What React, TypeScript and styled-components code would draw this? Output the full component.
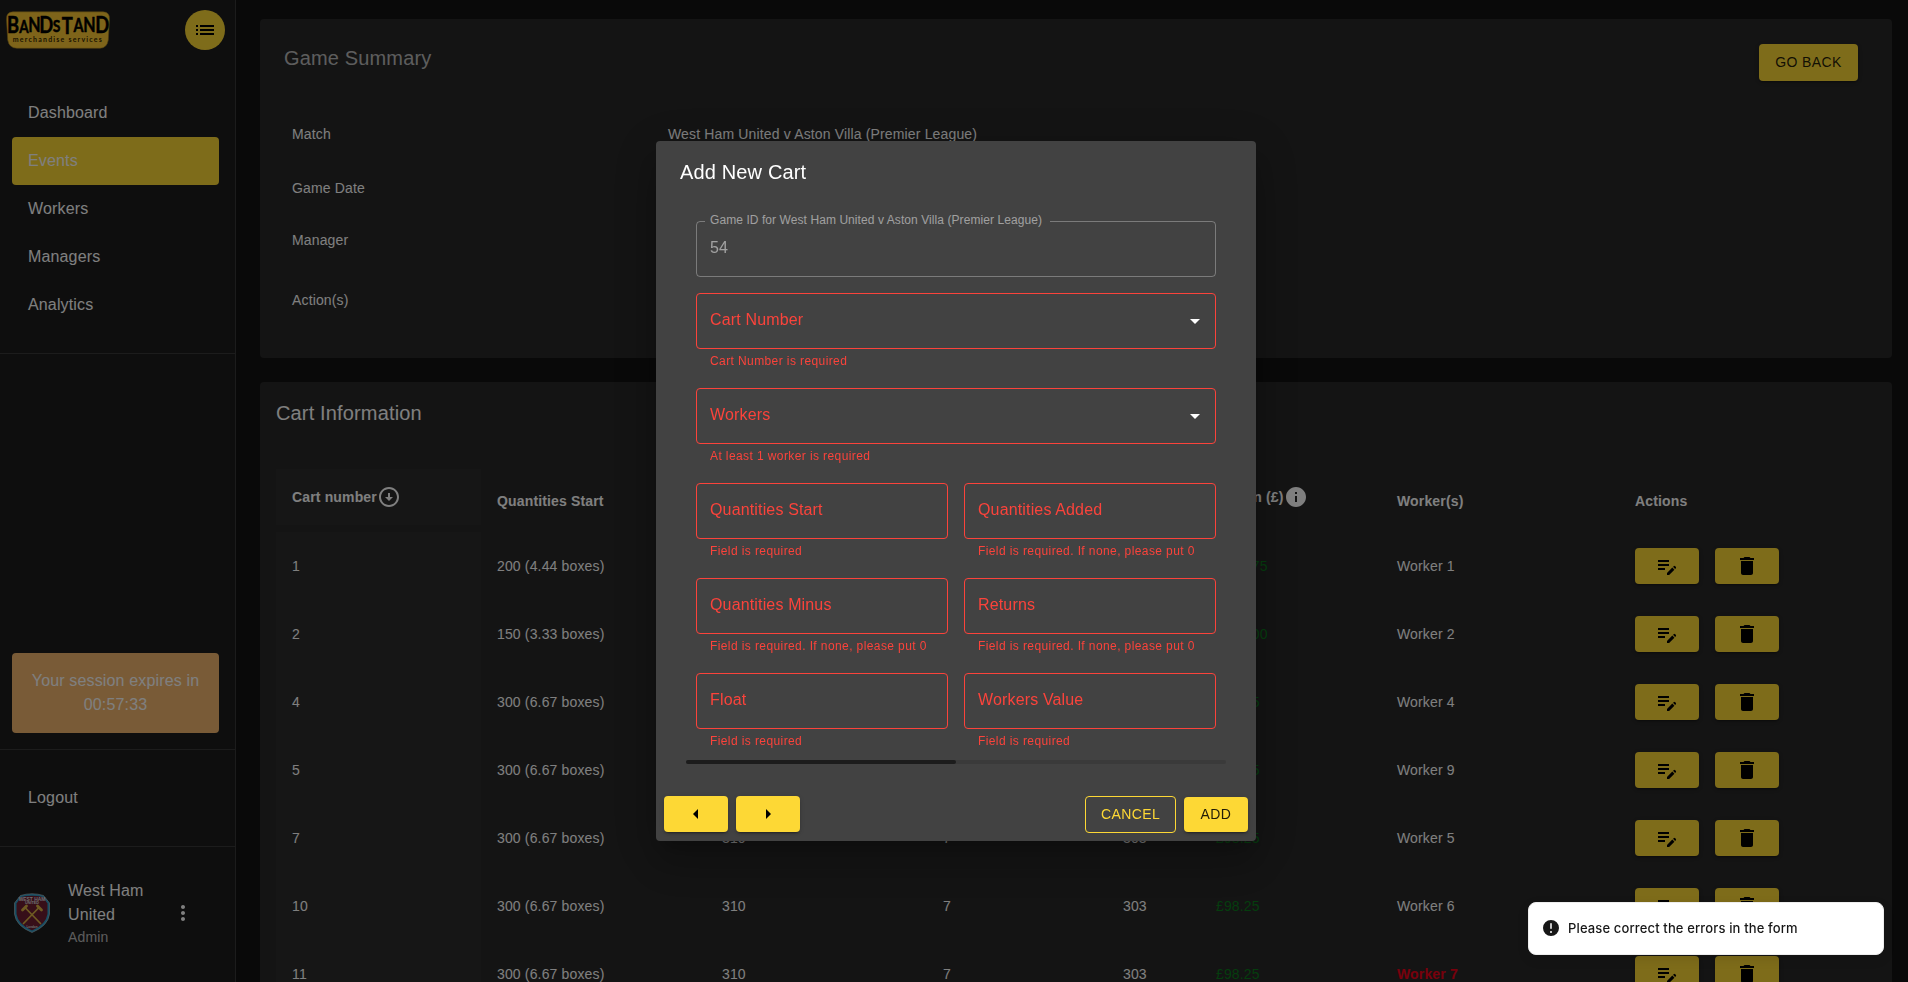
import React from 'react';
import styled, { createGlobalStyle, css } from 'styled-components';
import {
  MdArrowDropDown,
  MdArrowLeft,
  MdArrowRight,
  MdDelete,
  MdEditNote,
  MdInfo,
  MdList,
  MdMoreVert,
  MdOutlineArrowCircleDown,
} from 'react-icons/md';

const YELLOW = '#fdd835';
const RED = '#fb433b';
const SHADOW_2 =
  '0 3px 1px -2px rgba(0,0,0,.2), 0 2px 2px 0 rgba(0,0,0,.14), 0 1px 5px 0 rgba(0,0,0,.12)';

const GlobalStyle = createGlobalStyle`
  *, *::before, *::after { box-sizing: border-box; }
  body {
    margin: 0;
    background: #121212;
    color: #fff;
    font-family: "Liberation Sans", Arial, sans-serif;
    font-size: 14px;
    overflow: hidden;
  }
`;

const Page = styled.div`
  display: flex;
  height: 982px;
  overflow: hidden;
`;

/* Sidebar */

const Sidebar = styled.aside`
  display: flex;
  flex-direction: column;
  flex: none;
  width: 236px;
  height: 982px;
  background: #1c1c1c;
  border-right: 1px solid #383838;
`;

const SidebarTop = styled.div`
  display: flex;
  align-items: center;
  justify-content: space-between;
  height: 60px;
  padding: 0 10px 0 6px;
`;

const MenuButton = styled.button`
  display: grid;
  place-items: center;
  width: 40px;
  height: 40px;
  padding: 0;
  border: 0;
  border-radius: 50%;
  background: ${YELLOW};
  color: #000;
  font-size: 24px;
`;

const Nav = styled.nav`
  display: flex;
  flex-direction: column;
  margin-top: 28px;
  padding: 1px 16px 24px 12px;
`;

const NavItem = styled.a<{ $active?: boolean }>`
  display: flex;
  align-items: center;
  height: 48px;
  padding: 0 16px;
  border-radius: 4px;
  font-size: 16px;
  letter-spacing: 0.00938em;
  ${(p) => p.$active && css`background: ${YELLOW};`}
`;

const Divider = styled.hr`
  width: 100%;
  height: 1px;
  margin: 0;
  border: 0;
  background: #383838;
`;

const SessionBox = styled.div`
  display: flex;
  align-items: center;
  justify-content: center;
  height: 80px;
  margin: auto 16px 16px 12px;
  border-radius: 4px;
  background: #f3b76f;
  text-align: center;
  font-size: 16px;
  line-height: 24px;
  letter-spacing: 0.00938em;
  padding: 0 10px;
`;

const LogoutRow = styled.div`
  padding: 24px 12px;
`;

const Profile = styled.div`
  display: flex;
  align-items: center;
  height: 131px;
  margin-bottom: 4px;
  padding-left: 14px;
`;

const ProfileText = styled.div`
  width: 103px;
  margin-left: 18px;
  font-size: 16px;
  line-height: 24px;
  letter-spacing: 0.00938em;
`;

const ProfileRole = styled.div`
  color: rgba(255, 255, 255, 0.7);
  font-size: 14px;
  line-height: 20px;
  letter-spacing: 0.01071em;
`;

/* Main */

const Main = styled.main`
  display: flex;
  flex-direction: column;
  flex: 1;
  gap: 24px;
  padding: 19px 16px 0 24px;
`;

const Card = styled.section<{ $h?: number }>`
  flex: none;
  height: ${(p) => (p.$h ? `${p.$h}px` : 'auto')};
  border-radius: 4px;
  background: #282828;
`;

const SummaryHead = styled.header`
  display: flex;
  justify-content: space-between;
  height: 87px;
  padding: 23px 34px 0 24px;
`;

const Title = styled.h2<{ $muted?: boolean }>`
  margin: 0;
  font-size: 20px;
  font-weight: 400;
  line-height: 32px;
  letter-spacing: 0.0075em;
  color: ${(p) => (p.$muted ? 'rgba(255,255,255,.7)' : '#fff')};
`;

const Button = styled.button<{ $outlined?: boolean; $h?: number; $w?: number }>`
  display: inline-flex;
  align-items: center;
  justify-content: center;
  width: ${(p) => (p.$w ? `${p.$w}px` : 'auto')};
  height: ${(p) => p.$h ?? 36}px;
  padding: 0;
  border: ${(p) => (p.$outlined ? `1px solid ${YELLOW}` : '0')};
  border-radius: 4px;
  background: ${(p) => (p.$outlined ? 'transparent' : YELLOW)};
  color: ${(p) => (p.$outlined ? YELLOW : 'rgba(0,0,0,.87)')};
  box-shadow: ${(p) => (p.$outlined ? 'none' : SHADOW_2)};
  font-family: inherit;
  font-size: 14px;
  letter-spacing: 0.02857em;
  svg { width: 24px; height: 24px; color: #000; }
`;

const BackButton = styled(Button)`
  margin-top: 2px;
  padding-bottom: 1px;
`;

const SummaryRow = styled.div<{ $h: number }>`
  display: grid;
  grid-template-columns: 376px 1fr;
  align-items: center;
  height: ${(p) => p.$h}px;
  padding: 0 32px;
  letter-spacing: 0.01071em;
`;

const CartHead = styled.header`
  height: 87px;
  padding: 15px 16px 0;
`;

const columns = '205px 225px 221px 180px 93px 181px 238px 1fr';

const HeadRow = styled.div`
  display: grid;
  grid-template-columns: ${columns};
  margin: 0 16px 7px;
  height: 56px;
  font-weight: 700;
  letter-spacing: 0.01071em;
`;

const BodyRow = styled.div`
  display: grid;
  grid-template-columns: ${columns};
  margin: 0 16px;
  height: 68px;
  letter-spacing: 0.01071em;
`;

const Cell = styled.div<{ $sticky?: boolean; $drop?: number; $tone?: 'gain' | 'alert' }>`
  display: flex;
  align-items: center;
  padding: ${(p) => p.$drop ?? 0}px 0 0 16px;
  white-space: nowrap;
  ${(p) => p.$sticky && css`background: #2d2d2d;`}
  ${(p) => p.$tone === 'gain' && css`color: #0a7a1c;`}
  ${(p) => p.$tone === 'alert' && css`color: #f00018; font-weight: 700;`}
  > svg { width: 24px; height: 24px; flex: none; }
`;

const Actions = styled(Cell)`
  gap: 16px;
`;

/* Dialog */

const Backdrop = styled.div`
  position: fixed;
  inset: 0;
  display: flex;
  justify-content: center;
  align-items: center;
  background: rgba(0, 0, 0, 0.5);
  padding-left: 4px;
`;

const Dialog = styled.div`
  display: flex;
  flex-direction: column;
  width: 600px;
  height: 700px;
  border-radius: 4px;
  background: #424242;
  box-shadow: 0 11px 15px -7px rgba(0, 0, 0, 0.2), 0 24px 38px 3px rgba(0, 0, 0, 0.14),
    0 9px 46px 8px rgba(0, 0, 0, 0.12);
`;

const DialogTitle = styled.h2`
  margin: 0;
  padding: 15px 24px 17px;
  font-size: 20px;
  font-weight: 400;
  line-height: 32px;
  letter-spacing: 0.0075em;
`;

const Form = styled.form`
  display: grid;
  grid-template-columns: 1fr 1fr;
  column-gap: 16px;
  row-gap: 16px;
  padding: 16px 40px 0;
`;

const Field = styled.div<{ $wide?: boolean }>`
  grid-column: ${(p) => (p.$wide ? '1 / -1' : 'auto')};
`;

const Outline = styled.div<{ $error?: boolean }>`
  position: relative;
  display: flex;
  align-items: center;
  justify-content: space-between;
  height: 56px;
  padding: 0 8px 2px 13px;
  border: 1px solid ${(p) => (p.$error ? RED : 'rgba(255,255,255,.3)')};
  border-radius: 4px;
  color: ${(p) => (p.$error ? RED : 'rgba(255,255,255,.5)')};
  font-size: 16px;
  letter-spacing: 0.00938em;
  svg { width: 24px; height: 24px; color: #fff; margin-top: 2px; }
`;

const FloatingLabel = styled.span`
  position: absolute;
  top: -10px;
  left: 8px;
  padding: 0 8px 0 5px;
  background: #424242;
  color: rgba(255, 255, 255, 0.5);
  font-size: 12px;
  line-height: 16px;
  letter-spacing: 0.075px;
`;

const Helper = styled.p`
  margin: 2px 14px 1px;
  color: ${RED};
  font-size: 12px;
  line-height: 20px;
  letter-spacing: 0.03333em;
  white-space: nowrap;
`;

const Progress = styled.div`
  height: 4px;
  margin: 8px 30px 0;
  border-radius: 2px;
  background: #3a3a3a;
`;

const ProgressBar = styled.div`
  height: 4px;
  border-radius: 2px;
  background: #1c1c1c;
`;

const DialogActions = styled.footer`
  display: flex;
  align-items: flex-start;
  gap: 8px;
  margin-top: auto;
  padding: 8px;
`;

const Spacer = styled.div`
  flex: 1;
`;

const CancelButton = styled(Button)`
  padding-bottom: 1px;
`;

const AddButton = styled(Button)`
  margin-top: 1px;
  padding-bottom: 1px;
`;

const Toast = styled.div`
  position: fixed;
  right: 24px;
  bottom: 27px;
  display: flex;
  align-items: center;
  gap: 7px;
  width: 356px;
  height: 53px;
  padding: 0 12px 1px;
  border: 1px solid #ededed;
  border-radius: 8px;
  background: #fff;
  color: #171717;
  box-shadow: 0 4px 12px rgba(0, 0, 0, 0.1);
  font: 500 13px/20px Inter, sans-serif;
  letter-spacing: 0.14px;
  svg { width: 20px; height: 20px; flex: none; }
`;

const SQUEEZE = 0.8;
const wordmark = [
  { ch: 'B', x: 7, y: 21.8, size: 23 },
  { ch: 'A', x: 18, y: 21.6, size: 17 },
  { ch: 'N', x: 28.5, y: 21.4, size: 20 },
  { ch: 'D', x: 40.3, y: 21.8, size: 23 },
  { ch: 'S', x: 50.5, y: 21.4, size: 17.5 },
  { ch: 'T', x: 61.3, y: 22.6, size: 23 },
  { ch: 'A', x: 72.6, y: 20.8, size: 18 },
  { ch: 'N', x: 83.5, y: 20.8, size: 20 },
  { ch: 'D', x: 96.3, y: 21.8, size: 23 },
];

const Logo = () => (
  <svg width="104" height="38" viewBox="0 0 104 38" aria-label="Bandstand">
    <path
      d="M7 .8H97Q104 1 103.500 8.500L102.300 29Q101 37 94 37.300H11Q3 37 1.700 29L.5 8.500Q0 1 7 .8Z"
      fill="#fdc935"
      stroke="#9c7a20"
      strokeWidth=".6"
    />
    <text
      transform={`scale(${SQUEEZE} 1)`}
      textAnchor="middle"
      fontFamily="Lato, sans-serif"
      fontWeight="700"
      fill="#000"
      stroke="#000"
      strokeWidth=".5"
      strokeLinejoin="round"
    >
      {wordmark.map((l, i) => (
        <tspan key={i} x={l.x / SQUEEZE} y={l.y} fontSize={l.size}>{l.ch}</tspan>
      ))}
    </text>
    <text x="6.800" y="30.800" fontFamily="Lato, sans-serif" fontWeight="700" fontSize="7" letterSpacing="1.200" fill="#3a2a00">
      merchandise services
    </text>
  </svg>
);

const Crest = () => (
  <svg width="36" height="40" viewBox="0 0 36 40" aria-label="West Ham United">
    <path d="M6.500 2.500Q18-1 29.500 2.500L35.500 10V21Q34 33 18 39.500 2 33 .5 21V10Z" fill="#2c9fc9" stroke="#a9b4bd" strokeWidth=".7" />
    <path d="M7 4Q18 1.500 29 4L33.500 10.500V21Q32 31.500 18 37.500 4 31.500 2.500 21V10.500Z" fill="#6f1e33" />
    <g stroke="#dcb545" strokeWidth="1.700" strokeLinecap="round">
      <path d="M11 14.500 26.500 30.500M25 14.500 9.500 30.500" />
      <path d="M8.500 17 12.500 13M27.500 17 23.500 13" strokeWidth="2.800" />
    </g>
    <g fill="#ddd" fontFamily="Liberation Sans, sans-serif" fontWeight="700" textAnchor="middle">
      <text x="18" y="7.500" fontSize="4.900">WEST HAM</text>
      <text x="18" y="10.900" fontSize="3.800">UNITED</text>
      <text x="18" y="34.500" fontSize="3">London</text>
    </g>
  </svg>
);

const ErrorIcon = () => (
  <svg viewBox="0 0 20 20" fill="currentColor">
    <path fillRule="evenodd" clipRule="evenodd" d="M18 10a8 8 0 11-16 0 8 8 0 0116 0zm-8-5a.75.75 0 01.75.75v4.500a.75.75 0 01-1.500 0v-4.500A.75.75 0 0110 5zm0 10a1 1 0 100-2 1 1 0 000 2z" />
  </svg>
);

type Cart = {
  id: number;
  start: string;
  total: number;
  returns: number;
  sold: number;
  money: string;
  worker: string;
  alert?: boolean;
};

const carts: Cart[] = [
  { id: 1, start: '200 (4.44 boxes)', total: 210, returns: 7, sold: 203, money: '£131.75', worker: 'Worker 1' },
  { id: 2, start: '150 (3.33 boxes)', total: 160, returns: 7, sold: 153, money: '£131.00', worker: 'Worker 2' },
  { id: 4, start: '300 (6.67 boxes)', total: 310, returns: 7, sold: 303, money: '£98.25', worker: 'Worker 4' },
  { id: 5, start: '300 (6.67 boxes)', total: 310, returns: 7, sold: 303, money: '£98.25', worker: 'Worker 9' },
  { id: 7, start: '300 (6.67 boxes)', total: 310, returns: 7, sold: 303, money: '£98.25', worker: 'Worker 5' },
  { id: 10, start: '300 (6.67 boxes)', total: 310, returns: 7, sold: 303, money: '£98.25', worker: 'Worker 6' },
  { id: 11, start: '300 (6.67 boxes)', total: 310, returns: 7, sold: 303, money: '£98.25', worker: 'Worker 7', alert: true },
];

const NONE = 'Field is required. If none, please put 0';
const fields = [
  { label: 'Cart Number', helper: 'Cart Number is required', select: true },
  { label: 'Workers', helper: 'At least 1 worker is required', select: true },
  { label: 'Quantities Start', helper: 'Field is required' },
  { label: 'Quantities Added', helper: NONE },
  { label: 'Quantities Minus', helper: NONE },
  { label: 'Returns', helper: NONE },
  { label: 'Float', helper: 'Field is required' },
  { label: 'Workers Value', helper: 'Field is required' },
];

export default function App() {
  return (
    <>
      <GlobalStyle />
      <Page>
        <Sidebar>
          <SidebarTop>
            <Logo />
            <MenuButton><MdList /></MenuButton>
          </SidebarTop>
          <Nav>
            {['Dashboard', 'Events', 'Workers', 'Managers', 'Analytics'].map((n) => (
              <NavItem key={n} $active={n === 'Events'}>{n}</NavItem>
            ))}
          </Nav>
          <Divider />
          <SessionBox>Your session expires in 00:57:33</SessionBox>
          <Divider />
          <LogoutRow><NavItem>Logout</NavItem></LogoutRow>
          <Divider />
          <Profile>
            <Crest />
            <ProfileText>
              West Ham United
              <ProfileRole>Admin</ProfileRole>
            </ProfileText>
            <MdMoreVert size={24} />
          </Profile>
        </Sidebar>

        <Main>
          <Card $h={339}>
            <SummaryHead>
              <Title $muted>Game Summary</Title>
              <BackButton $w={99} $h={37}>GO BACK</BackButton>
            </SummaryHead>
            <SummaryRow $h={56}><span>Match</span><span>West Ham United v Aston Villa (Premier League)</span></SummaryRow>
            <SummaryRow $h={52}><span>Game Date</span></SummaryRow>
            <SummaryRow $h={52}><span>Manager</span></SummaryRow>
            <SummaryRow $h={68}><span>Action(s)</span></SummaryRow>
          </Card>

          <Card>
            <CartHead><Title>Cart Information</Title></CartHead>
            <HeadRow>
              <Cell $sticky>Cart number<MdOutlineArrowCircleDown /></Cell>
              <Cell $drop={8}>Quantities Start</Cell>
              <Cell $drop={8}>Total</Cell>
              <Cell $drop={8}>Returns</Cell>
              <Cell $drop={8}>Sold</Cell>
              <Cell>Return (£)<MdInfo /></Cell>
              <Cell $drop={8}>Worker(s)</Cell>
              <Cell $drop={8}>Actions</Cell>
            </HeadRow>
            {carts.map((c) => (
              <BodyRow key={c.id}>
                <Cell $sticky>{c.id}</Cell>
                <Cell>{c.start}</Cell>
                <Cell>{c.total}</Cell>
                <Cell>{c.returns}</Cell>
                <Cell>{c.sold}</Cell>
                <Cell $tone="gain">{c.money}</Cell>
                <Cell $tone={c.alert ? 'alert' : undefined}>{c.worker}</Cell>
                <Actions>
                  <Button $w={64}><MdEditNote /></Button>
                  <Button $w={64}><MdDelete /></Button>
                </Actions>
              </BodyRow>
            ))}
          </Card>
        </Main>
      </Page>

      <Backdrop>
        <Dialog>
          <DialogTitle>Add New Cart</DialogTitle>
          <Form>
            <Field $wide>
              <Outline>
                <FloatingLabel>Game ID for West Ham United v Aston Villa (Premier League)</FloatingLabel>
                54
              </Outline>
            </Field>
            {fields.map((f) => (
              <Field key={f.label} $wide={f.select}>
                <Outline $error>
                  {f.label}
                  {f.select && <MdArrowDropDown />}
                </Outline>
                <Helper>{f.helper}</Helper>
              </Field>
            ))}
          </Form>
          <Progress><ProgressBar style={{ width: '50%' }} /></Progress>
          <DialogActions>
            <Button $w={64}><MdArrowLeft /></Button>
            <Button $w={64}><MdArrowRight /></Button>
            <Spacer />
            <CancelButton $outlined $w={91} $h={37}>CANCEL</CancelButton>
            <AddButton $w={64} $h={35}>ADD</AddButton>
          </DialogActions>
        </Dialog>
      </Backdrop>

      <Toast><ErrorIcon />Please correct the errors in the form</Toast>
    </>
  );
}
